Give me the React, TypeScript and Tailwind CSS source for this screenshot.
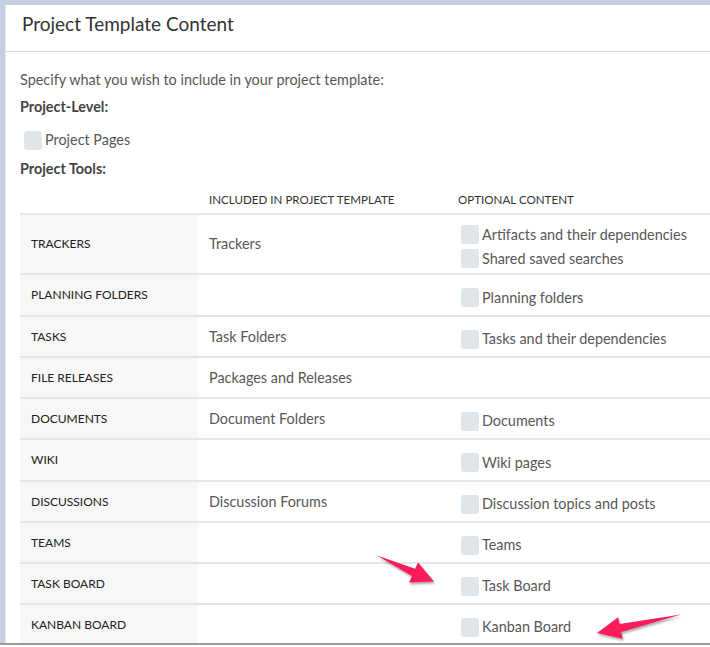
import React from "react";

type Row = {
  tool: string;
  included?: string;
  optional: string[];
  h: string;
};

const rows: Row[] = [
  { tool: "Trackers", included: "Trackers", optional: ["Artifacts and their dependencies", "Shared saved searches"], h: "h-[60px]" },
  { tool: "Planning Folders", optional: ["Planning folders"], h: "h-[42px]" },
  { tool: "Tasks", included: "Task Folders", optional: ["Tasks and their dependencies"], h: "h-[41px]" },
  { tool: "File Releases", included: "Packages and Releases", optional: [], h: "h-[41px]" },
  { tool: "Documents", included: "Document Folders", optional: ["Documents"], h: "h-[41px]" },
  { tool: "Wiki", optional: ["Wiki pages"], h: "h-[42px]" },
  { tool: "Discussions", included: "Discussion Forums", optional: ["Discussion topics and posts"], h: "h-[41px]" },
  { tool: "Teams", optional: ["Teams"], h: "h-[41px]" },
  { tool: "Task Board", optional: ["Task Board"], h: "h-[41px]" },
  { tool: "Kanban Board", optional: ["Kanban Board"], h: "h-[41px]" },
];

function Checkbox() {
  return <span className="inline-block w-[18px] h-[19px] rounded-[3px] bg-[#dfe5e8] shrink-0" />;
}

export default function App() {
  return (
    <div
      className="relative w-[710px] h-[647px] overflow-hidden bg-white"
      style={{ fontFamily: "Lato, 'Open Sans', sans-serif" }}
    >
      <div className="h-[645px] flex flex-col bg-[#c6cfe1] pt-[5px] pl-[5px] border-b-2 border-[#9a9a9a]">
        {/* panel */}
        <div className="flex-1 flex flex-col bg-white border-l border-[#e4eaf4] overflow-hidden">
          <div className="h-[47px] shrink-0 flex items-center pl-[16px] pb-[8px] border-b border-[#d2d9e5] text-[19px] text-[#333]">
            Project Template Content
          </div>

          <div className="flex flex-col pl-[14px] pt-[18px] text-[14.4px] text-[#575757]">
            <div className="leading-[20px]">Specify what you wish to include in your project template:</div>
            <div className="leading-[20px] mt-[7px] font-bold text-[#444]">Project-Level:</div>
            <div className="flex items-center gap-[3px] mt-[13px] pl-[4px] h-[20px]">
              <Checkbox />
              <span>Project Pages</span>
            </div>
            <div className="leading-[20px] mt-[9px] font-bold text-[#444]">Project Tools:</div>

            {/* table */}
            <div className="flex flex-col">
              <div className="grid grid-cols-[178px_249px_1fr] h-[34px] items-end pb-[3px] text-[11.6px] text-[#333] uppercase">
                <div />
                <div className="pl-[11px] leading-[20px]">Included in Project Template</div>
                <div className="pl-[11px] leading-[20px]">Optional Content</div>
              </div>
              {rows.map((r) => (
                <div
                  key={r.tool}
                  className={`grid grid-cols-[178px_249px_1fr] border-t-2 border-[#e6e6e6] ${r.h}`}
                >
                  <div className="bg-[#f7f7f7] flex items-center pl-[11px] text-[12px] uppercase text-[#222]">
                    {r.tool}
                  </div>
                  <div className="flex items-center pl-[11px]">{r.included}</div>
                  <div className="flex flex-col justify-center pl-[14px] pt-[5px]">
                    {r.optional.map((o) => (
                      <div key={o} className="flex items-center gap-[3px] h-[24px]">
                        <Checkbox />
                        <span>{o}</span>
                      </div>
                    ))}
                  </div>
                </div>
              ))}
            </div>
          </div>
        </div>
      </div>

      {/* annotation arrows */}
      <svg className="absolute inset-0 pointer-events-none" width="710" height="647" viewBox="0 0 710 647">
        <defs>
          <filter id="sh" x="-20%" y="-20%" width="140%" height="140%">
            <feDropShadow dx="1" dy="2" stdDeviation="1" floodColor="#000" floodOpacity="0.35" />
          </filter>
        </defs>
        <g fill="#fb1a5c" filter="url(#sh)">
          <polygon points="377,555.5 415.1,568.8 418,562.4 434,581.5 409,582.4 411.9,576" />
          <polygon points="681,614.5 619.6,624.1 618.1,617.2 597,633 622.7,638.8 621.2,631.9" />
        </g>
      </svg>
    </div>
  );
}
